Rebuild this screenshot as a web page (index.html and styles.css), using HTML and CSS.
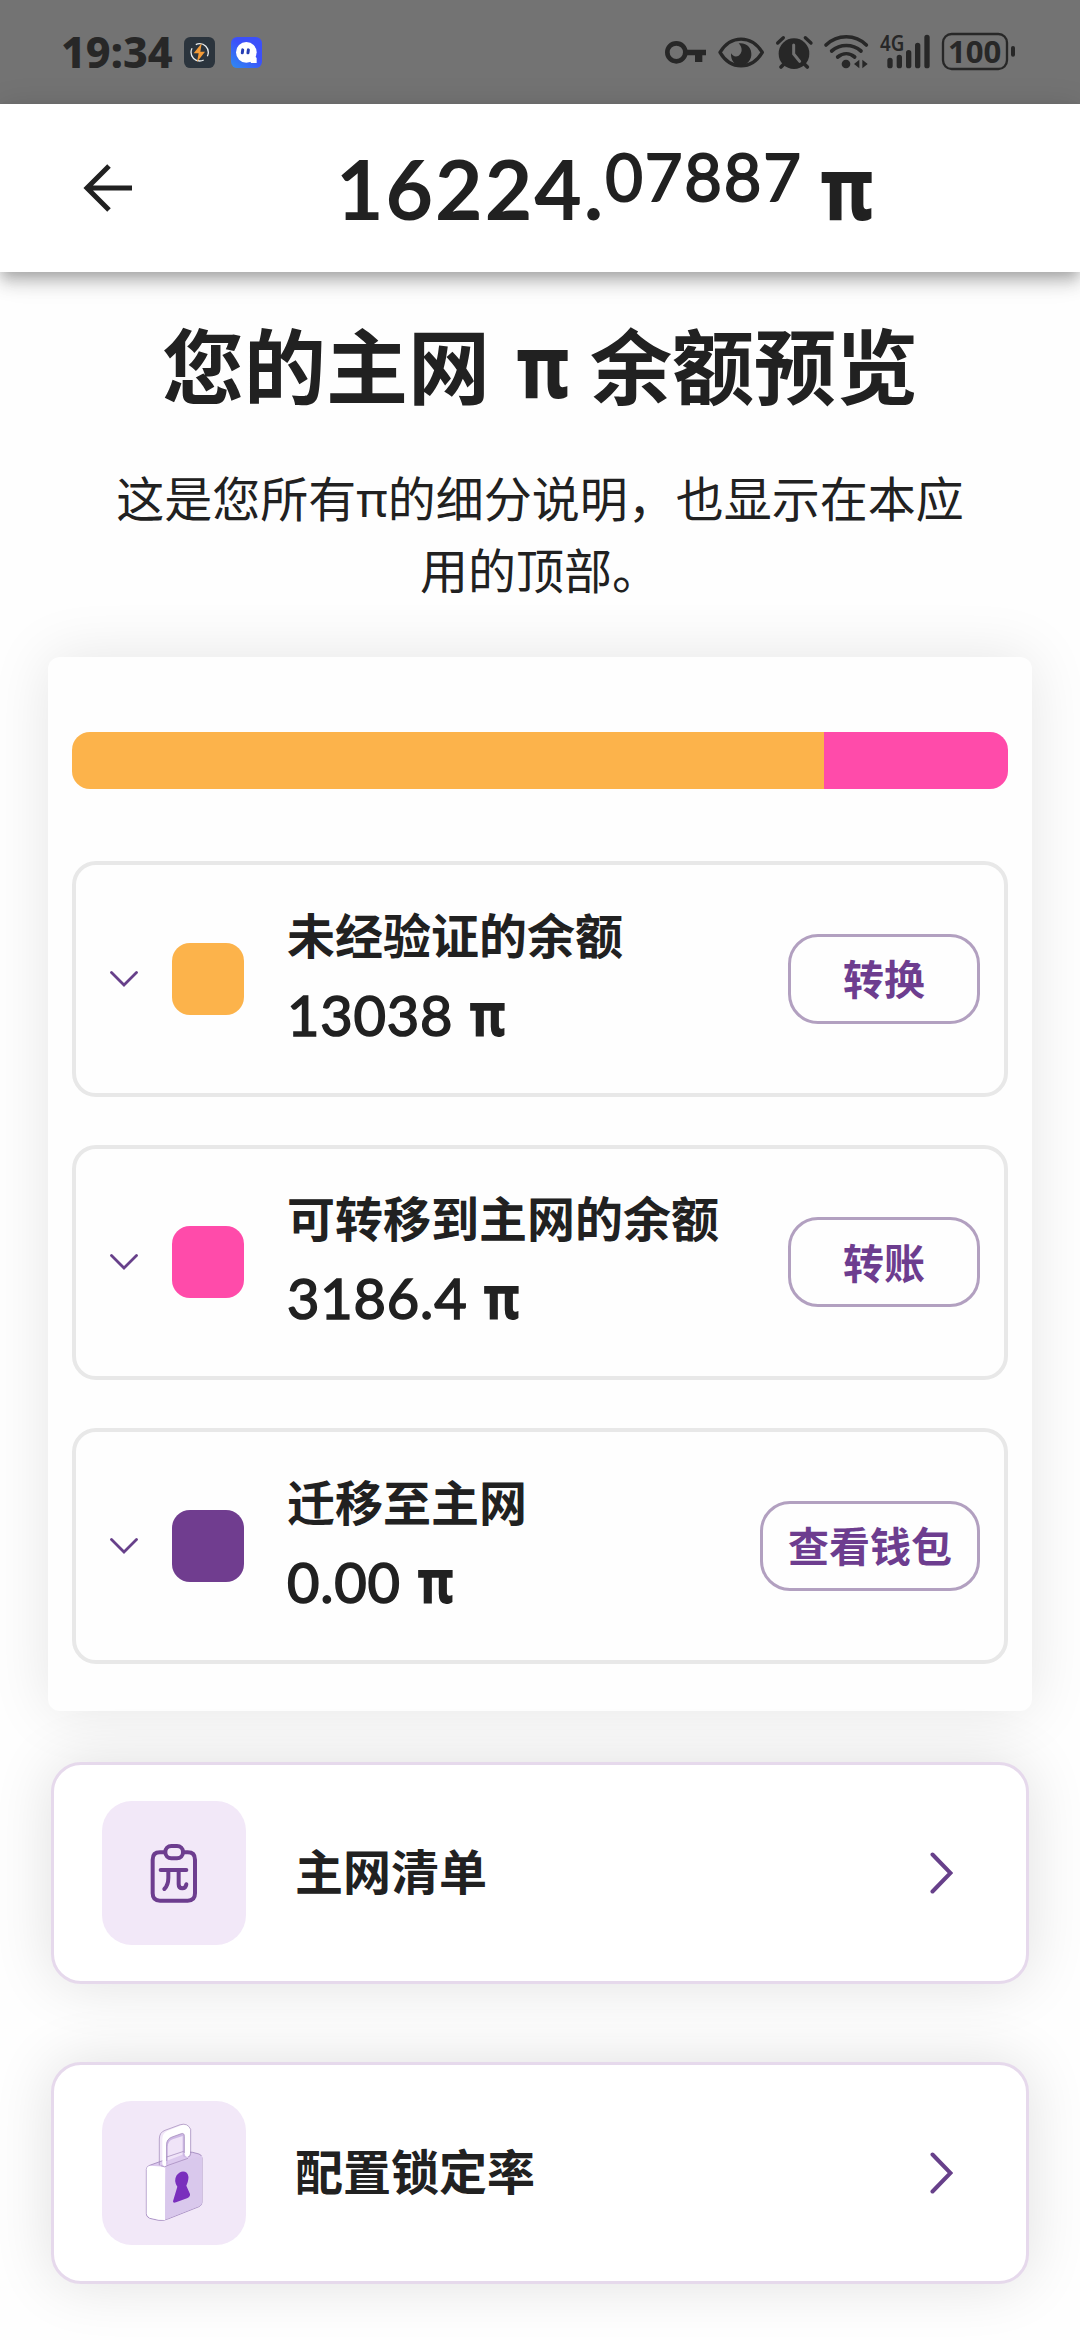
FILE: index.html
```html
<!DOCTYPE html>
<html lang="zh-CN">
<head>
<meta charset="utf-8">
<title>主网余额</title>
<link rel="stylesheet" href="styles.css">
</head>
<body>
<div class="status">
  <span class="time">19:34</span>
  <svg class="app" viewBox="0 0 93 93"><rect width="93" height="93" rx="19" fill="#2b343d"/><circle cx="47" cy="46" r="26" fill="none" stroke="#e8ecee" stroke-width="4" stroke-dasharray="66 15.7" stroke-dashoffset="-28"/><path d="M53 19 29 49h15l-5 26 24-31H49z" fill="#f49a36"/></svg>
  <svg class="app" viewBox="0 0 93 93"><defs><linearGradient id="g" x1="0" y1="1" x2=".5" y2=".4"><stop offset="0" stop-color="#2f8cf0"/><stop offset="1" stop-color="#3c50fa"/></linearGradient></defs><rect width="93" height="93" rx="19" fill="url(#g)"/><circle cx="46" cy="46" r="31" fill="#fff"/><path d="M52 60l19-3 6 6v15H60z" fill="#fff"/><rect x="30" y="34" width="9" height="18" rx="4.500" fill="#263fb5" transform="rotate(8 34 43)"/><rect x="47" y="34" width="9" height="18" rx="4.500" fill="#263fb5" transform="rotate(8 51 43)"/></svg>
  <svg class="indicators" viewBox="0 0 1260 270" fill="#272727" stroke="none">
    <circle cx="109" cy="127" r="27" fill="none" stroke="#272727" stroke-width="14"/>
    <path d="M138 119h60v17h-11v20h-22v-20h-27z"/>
    <path d="M240 127c32-53 94-53 127 0-33 54-95 54-127 0z" fill="none" stroke="#272727" stroke-width="10" stroke-linejoin="round"/>
    <path d="M296 100c24-3 40 14 38 36-2 18-15 30-32 30-18 0-30-14-29-36 5 9 15 12 23 7 11-7 13-24 0-37z"/>
    <circle cx="462" cy="131" r="46"/>
    <path d="M413 99l17-16M513 99l-17-16" stroke="#272727" stroke-width="10" stroke-linecap="round"/>
    <path d="M423 171l12-12M502 171l-12-12" stroke="#272727" stroke-width="11" stroke-linecap="round"/>
    <path d="M461 105v27l18 22" fill="none" stroke="#727272" stroke-width="9" stroke-linecap="round"/>
    <path d="M558 105c34-33 88-33 121 0M575 123c26-22 62-22 88 0M593 141c16-13 36-13 51 0" fill="none" stroke="#272727" stroke-width="11" stroke-linecap="round"/>
    <circle cx="618" cy="162" r="13"/>
    <path d="M642 162l16-13v26zM683 162l-16-13v26z"/>
    <text x="720" y="122" class="net" textLength="73" lengthAdjust="spacingAndGlyphs">4G</text>
    <path d="M750 151v16M778 142v25M806 128v39M833 106v61M861 82v85" fill="none" stroke="#272727" stroke-width="16" stroke-linecap="round"/>
    <rect x="909" y="72" width="192" height="105" rx="26" fill="none" stroke="#272727" stroke-width="7"/>
    <path d="M1119 114v20" stroke="#272727" stroke-width="12" stroke-linecap="round"/>
    <text x="924" y="158" class="batt" textLength="160" lengthAdjust="spacingAndGlyphs">100</text>
  </svg>
</div>
<header class="bar">
  <svg class="back" viewBox="0 0 49 48" fill="none" stroke="#212121" stroke-width="5"><path d="M26 2 4 24l22 22M4 24h45"/></svg>
  <div class="total"><span class="whole">16224.</span><span class="frac">07887</span><span class="pi">π</span></div>
</header>
<main>
  <h1>您的主网<span class="pi">π</span>余额预览</h1>
  <p class="intro">这是您所有<span class="thin-pi">π</span>的细分说明，也显示在本应用的顶部。</p>
  <section class="card">
    <div class="split"><div class="part orange" style="width:80.36%"></div><div class="part pink"></div></div>
    <div class="row">
      <svg class="down" viewBox="0 0 28 16"><path d="M1.500 1.500 14 14 26.500 1.500"/></svg>
      <i class="swatch orange"></i>
      <div class="info"><h2>未经验证的余额</h2><div class="value">13038<span class="pi">π</span></div></div>
      <button class="btn">转换</button>
    </div>
    <div class="row">
      <svg class="down" viewBox="0 0 28 16"><path d="M1.500 1.500 14 14 26.500 1.500"/></svg>
      <i class="swatch pink"></i>
      <div class="info"><h2>可转移到主网的余额</h2><div class="value">3186.4<span class="pi">π</span></div></div>
      <button class="btn">转账</button>
    </div>
    <div class="row">
      <svg class="down" viewBox="0 0 28 16"><path d="M1.500 1.500 14 14 26.500 1.500"/></svg>
      <i class="swatch purple"></i>
      <div class="info"><h2>迁移至主网</h2><div class="value">0.00<span class="pi">π</span></div></div>
      <button class="btn">查看钱包</button>
    </div>
  </section>
  <nav class="menu">
    <a class="item">
      <svg class="tile" viewBox="0 0 432 432" fill="none" stroke="#6d3d8f" stroke-width="12" stroke-linecap="round" stroke-linejoin="round">
        <path d="M187 154h-13q-22 0-22 22v101q0 22 22 22h83q22 0 22-22V176q0-22-22-22h-13"/>
        <rect x="190" y="135" width="53" height="37" rx="18"/>
        <path d="M176 207h77M199 210v20q0 22-12 34M230 210v40q0 12 11 12 10 0 12-12"/>
      </svg>
      <span>主网清单</span>
      <svg class="next" viewBox="0 0 23 42"><path d="M2.500 2.500 20.500 21 2.500 39.500"/></svg>
    </a>
    <a class="item">
      <svg class="tile" viewBox="0 0 432 432">
        <path d="M133 205q1-9 10-12l105-38q11-4 24-1l19 5q9 3 9 12v133q0 9-9 13l-91 36q-14 7-30 5l-23-5q-14-4-14-15z" fill="#dcc9ee" stroke="#8e72ae" stroke-width="2"/>
        <path d="M134 205q0-9 10-11l46 3-1 160-19-1-23-5q-13-4-13-14z" fill="#fff"/>
        <path d="M191 198l109-34v139q0 9-9 13l-91 36-11 4z" fill="#d9c8ec"/>
        <path d="M193 180l56-22v-53q0-10-11-7l-28 10q-16 7-16 22z" fill="#f0e4f8"/>
        <path d="M181 190v-76q0-18 16-25l44-17q16-5 23 9v74q0 12-8 12t-9-12v-50q0-10-11-7l-27 10q-16 7-16 22v63q-5 8-12-3z" fill="#fff"/>
        <path d="M193 192v-60q0-17 16-23l28-11q10-3 10 8v50q1 12 9 13-12 2-14-8v-56l-30 10q-14 5-15 22v53z" fill="#cdb8e4"/>
        <path d="M172 193V114q0-20 17-26l46-17q22-6 31 14v72q0 10-8 11M194 180v-50q0-16 16-22l28-10q9-3 9 8v50M194 168l51-17M176 194q12 8 22-1l60-21" fill="none" stroke="#9b82b5" stroke-width="2"/>
        <path d="M213 301l13-44q-12-17-2-34 11-15 25-11 12 5 10 22-1 10-6 20l11 25q1 9-9 13l-33 12q-9 4-9-3z" fill="#7a2fbd"/>
      </svg>
      <span>配置锁定率</span>
      <svg class="next" viewBox="0 0 23 42"><path d="M2.500 2.500 20.500 21 2.500 39.500"/></svg>
    </a>
  </nav>
</main>
</body>
</html>
```
FILE: styles.css
```css
* { box-sizing: border-box; }
html { overflow: hidden; }
body {
  margin: 0;
  width: 1080px;
  height: 2340px;
  overflow: hidden;
  background: #fefefe;
  color: #212121;
  font-family: Lato, "Noto Sans CJK SC", sans-serif;
}
h1, h2, p { margin: 0; }
svg { display: block; flex: none; }
.pi {
  display: inline-block;
  width: .6em;
  font-family: "Noto Sans", sans-serif;
  font-weight: 800;
  text-align: left;
  transform: scaleX(.8);
  transform-origin: left;
}

.status {
  display: flex;
  align-items: center;
  height: 104px;
  padding: 0 20px 0 61px;
  background: #737373;
}
.time {
  width: 123px;
  font: 800 43px/60px "Noto Sans", sans-serif;
  color: #272727;
}
.app { width: 31px; height: 31px; margin-right: 16px; }
.indicators { width: 420px; height: 90px; margin: 6px 0 0 auto; }
.net { font: 600 63px "Noto Sans", sans-serif; }
.batt { font: 700 92px "Noto Sans", sans-serif; }

.bar {
  position: relative;
  display: flex;
  align-items: center;
  height: 168px;
  padding-left: 83px;
  background: #fff;
  box-shadow: 0 6px 12px -3px rgba(0,0,0,.2), 0 12px 15px rgba(0,0,0,.14), 0 3px 30px rgba(0,0,0,.12);
}
.back { width: 49px; height: 48px; }
.total {
  display: flex;
  align-items: baseline;
  margin-left: 204px;
  padding-top: 24px;
  line-height: 100px;
  white-space: nowrap;
}
.whole { font-size: 82px; font-weight: 700; letter-spacing: 2px; }
.frac { font-size: 65px; font-weight: 400; letter-spacing: 1.800px; -webkit-text-stroke: 1.800px #212121; margin-bottom: 19px; transform: translateY(-19px); }
.total .pi { font-size: 87px; margin-left: 17px; }

h1 {
  padding-top: 31px;
  font: 700 82px/120px "Noto Sans CJK SC", sans-serif;
  height: 182px;
  text-align: center;
}
h1 .pi { font-size: 87px; line-height: 1; margin: 0 22px 0 26px; }
.intro {
  height: 203px;
  padding: 6px 96px 0;
  font: 400 48px/72px "Noto Sans CJK SC", sans-serif;
  text-align: center;
}
.thin-pi { font-family: "Noto Sans", sans-serif; line-height: 1; }

.card {
  margin: 0 48px;
  height: 1054px;
  padding: 75px 24px 0;
  border-radius: 12px;
  background: #fefefe;
  box-shadow: 0 0 60px rgba(0,0,0,.1);
}
.split {
  display: flex;
  height: 57px;
  margin-bottom: 72px;
  border-radius: 18px;
  overflow: hidden;
}
.orange { background: #fcb34b; }
.pink { background: #ff4baa; }
.purple { background: #703d8f; }
.part.pink { flex: 1; }
.row {
  display: flex;
  align-items: center;
  height: 235.500px;
  margin-bottom: 48px;
  padding: 0 24px 0 34px;
  border: 4px solid #e8e8e8;
  border-radius: 24px;
}
.down { width: 28px; height: 16px; margin-right: 34px; }
.down path { fill: none; stroke: #67408a; stroke-width: 2.800; stroke-linecap: round; }
.swatch { width: 72px; height: 72px; flex: none; border-radius: 18px; margin-right: 43px; }
.info { flex: 1; white-space: nowrap; }
h2 { height: 76px; margin-top: -4px; font: 700 48px/72px "Noto Sans CJK SC", sans-serif; }
.value { font-size: 56px; line-height: 84px; height: 84px; font-weight: 400; letter-spacing: .8px; -webkit-text-stroke: 1.600px #212121; }
.value .pi { font-size: 60px; line-height: 1; letter-spacing: 0; margin-left: 16px; -webkit-text-stroke: 0; }
.btn {
  flex: none;
  min-width: 192px;
  height: 90px;
  padding: 0 25px 3px;
  border: 3px solid #b2a0c0;
  border-radius: 30px;
  background: none;
  color: #6d3d8f;
  font: 700 41px/80px "Noto Sans CJK SC", sans-serif;
}
.menu {
  display: flex;
  flex-direction: column;
  gap: 78px;
  padding: 51px 51px 0;
}
.item {
  display: flex;
  align-items: center;
  height: 222px;
  padding: 0 73px 0 48px;
  border: 3px solid #e6d9ec;
  border-radius: 30px;
  background: #fff;
  box-shadow: 0 0 60px rgba(0,0,0,.12);
  font: 700 48px/72px "Noto Sans CJK SC", sans-serif;
}
.tile { width: 144px; height: 144px; margin-right: 49px; border-radius: 30px; background: #f2e8f8; }
.item span { flex: 1; padding-bottom: 8px; }
.next { width: 23px; height: 42px; }
.next path { fill: none; stroke: #67408a; stroke-width: 4; stroke-linecap: round; }
```
